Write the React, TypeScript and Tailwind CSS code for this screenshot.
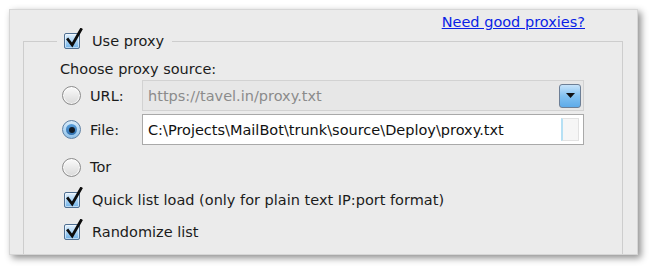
import React from 'react';

function CheckBox() {
  return (
    <span className="relative inline-block h-[16px] w-[16px] shrink-0">
      <span className="block h-[16px] w-[16px] rounded-[2px] border border-[#4f6f92] bg-gradient-to-b from-[#e3f1fc] via-[#a9d3f5] to-[#6fb1e6] shadow-[inset_0_0_0_1px_rgba(255,255,255,0.5)]" />
      <svg className="absolute left-[1px] top-[-5px]" width="19" height="20" viewBox="0 0 19 20">
        <path d="M3 11.5 L7.2 17 L16 1.5" fill="none" stroke="#0c0c0c" strokeWidth="2.8" strokeLinecap="square" strokeLinejoin="miter" />
      </svg>
    </span>
  );
}

function Radio({ checked }: { checked?: boolean }) {
  if (checked) {
    return (
      <span className="flex h-[19px] w-[19px] shrink-0 items-center justify-center rounded-full border border-[#5c7fa3] bg-gradient-to-b from-[#d7ebfa] to-[#8fc2ea]">
        <span className="flex h-[11px] w-[11px] items-center justify-center rounded-full bg-gradient-to-b from-[#5aa0dc] to-[#2f6fae]">
          <span className="h-[6px] w-[6px] rounded-full bg-[#111a24]" />
        </span>
      </span>
    );
  }
  return (
    <span className="h-[19px] w-[19px] shrink-0 rounded-full border border-[#8c8c8c] bg-gradient-to-b from-[#fbfbfb] to-[#d9d9d9] shadow-[inset_0_0_0_1px_rgba(255,255,255,0.7)]" />
  );
}

export default function App() {
  return (
    <div
      className="h-[273px] w-[655px] bg-white pl-[9px] pt-[9px] text-[14.5px] leading-[18px] text-[#1b1b1b]"
      style={{ fontFamily: '"DejaVu Sans", Verdana, sans-serif' }}
    >
      <div className="flex h-[246px] w-[629px] flex-col overflow-hidden border border-[#d6d6d6] bg-[#ebebeb] shadow-[3px_3px_7px_rgba(0,0,0,0.45)]">
        <div className="flex h-[21px] shrink-0 items-end justify-end pr-[52px]">
          <a href="#" className="text-[#0a1fe6] underline">
            Need good proxies?
          </a>
        </div>

        <fieldset className="ml-[13px] mr-[14px] flex-1 border-x border-t border-[#cdcdcd]">
          <legend className="ml-[33px] flex h-[20px] items-center gap-[12px] pl-[7px] pr-[8px]">
            <CheckBox />
            <span>Use proxy</span>
          </legend>

          <div className="flex flex-col pl-[36px]">
            <div className="mt-[8px] flex h-[20px] items-center">Choose proxy source:</div>

            <div className="mt-[1px] flex h-[31px] items-center">
              <label className="ml-[2px] flex w-[80px] items-center gap-[9px]">
                <Radio />
                <span>URL:</span>
              </label>
              <div className="flex h-[31px] w-[442px] items-center justify-between border border-[#d2d2d2] bg-[#e7e7e7] pl-[5px] pr-[2px]">
                <span className="text-[#8b8b8b]">https://tavel.in/proxy.txt</span>
                <span className="flex h-[24px] w-[22px] items-center justify-center rounded-[3px] border border-[#6d7f96] bg-gradient-to-b from-[#c6e3fa] via-[#82c1f0] to-[#5eabe9]">
                  <svg width="9" height="5" viewBox="0 0 9 5">
                    <path d="M0 0 H9 L4.5 5 Z" fill="#111" />
                  </svg>
                </span>
              </div>
            </div>

            <div className="mt-[3px] flex h-[31px] items-center">
              <label className="ml-[2px] flex w-[80px] items-center gap-[9px]">
                <Radio checked />
                <span>File:</span>
              </label>
              <div className="flex h-[31px] w-[442px] items-center justify-between border border-[#a9a9a9] bg-white pl-[5px] pr-[4px]">
                <span className="text-[#111]">C:\Projects\MailBot\trunk\source\Deploy\proxy.txt</span>
                <span className="h-[23px] w-[18px] border border-[#e2e2e2] border-l-2 border-l-[#b6e0f4] bg-[#f6f6f6]" />
              </div>
            </div>

            <div className="mt-[12px] flex h-[20px] items-center">
              <label className="ml-[2px] flex items-center gap-[9px]">
                <Radio />
                <span>Tor</span>
              </label>
            </div>

            <div className="mt-[13px] flex h-[20px] items-center gap-[12px] pl-[4px]">
              <CheckBox />
              <span>Quick list load (only for plain text IP:port format)</span>
            </div>

            <div className="mt-[12px] flex h-[20px] items-center gap-[12px] pl-[4px]">
              <CheckBox />
              <span>Randomize list</span>
            </div>
          </div>
        </fieldset>
      </div>
    </div>
  );
}
